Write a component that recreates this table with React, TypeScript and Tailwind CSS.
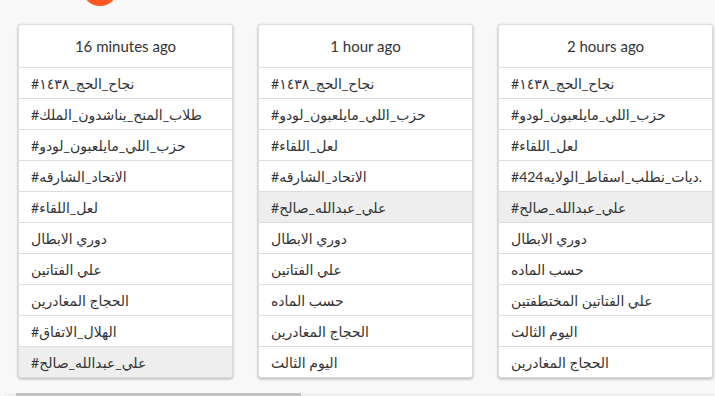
const columns = [
  {
    title: "16 minutes ago",
    tags: [
      "#نجاح_الحج_١٤٣٨",
      "#طلاب_المنح_يناشدون_الملك",
      "#حزب_اللي_مايلعبون_لودو",
      "#الاتحاد_الشارقه",
      "#لعل_اللقاء",
      "دوري الابطال",
      "علي الفتاتين",
      "الحجاج المغادرين",
      "#الهلال_الاتفاق",
      "#علي_عبدالله_صالح",
    ],
    active: 9,
  },
  {
    title: "1 hour ago",
    tags: [
      "#نجاح_الحج_١٤٣٨",
      "#حزب_اللي_مايلعبون_لودو",
      "#لعل_اللقاء",
      "#الاتحاد_الشارقه",
      "#علي_عبدالله_صالح",
      "دوري الابطال",
      "علي الفتاتين",
      "حسب الماده",
      "الحجاج المغادرين",
      "اليوم الثالث",
    ],
    active: 4,
  },
  {
    title: "2 hours ago",
    tags: [
      "#نجاح_الحج_١٤٣٨",
      "#حزب_اللي_مايلعبون_لودو",
      "#لعل_اللقاء",
      "#ديات_نطلب_اسقاط_الولايه424.",
      "#علي_عبدالله_صالح",
      "دوري الابطال",
      "حسب الماده",
      "علي الفتاتين المختطفتين",
      "اليوم الثالث",
      "الحجاج المغادرين",
    ],
    active: 4,
  },
]

function TrendCard({ title, tags, active }: { title: string; tags: string[]; active: number }) {
  return (
    <div className="w-[215px] shrink-0 rounded-[3px] border border-[#dcdcdc] bg-white shadow-[0_1px_3px_rgba(0,0,0,0.3)] overflow-hidden">
      <div className="flex h-[42px] items-center justify-center text-[15px] text-[#333]">{title}</div>
      {tags.map((tag, i) => (
        <div
          key={i}
          className={
            "flex h-[31px] items-center border-t border-[#dcdcdc] pl-[12px] text-[14px] text-[#333] whitespace-nowrap overflow-hidden " +
            (i === active ? "bg-[#eeeeee]" : "bg-white")
          }
        >
          {tag}
        </div>
      ))}
    </div>
  )
}

export default function App() {
  return (
    <div
      className="relative flex h-[396px] w-[715px] flex-col overflow-hidden bg-[#f8f8f8]"
      style={{ fontFamily: "Lato, 'DejaVu Sans', sans-serif" }}
    >
      {/* floating action button peeking from above */}
      <div className="absolute left-[82px] top-[-30px] h-[36px] w-[36px] rounded-full bg-[#ff5722]" />
      <div className="flex gap-[25px] pl-[18px] pt-[24px]">
        {columns.map((c) => (
          <TrendCard key={c.title} {...c} />
        ))}
      </div>
      {/* horizontal scrollbar */}
      <div className="ml-[4px] mt-auto h-[3px] bg-[#f0f0f0]">
        <div className="ml-[12px] h-full w-[285px] bg-[#c1c1c1]" />
      </div>
    </div>
  )
}
